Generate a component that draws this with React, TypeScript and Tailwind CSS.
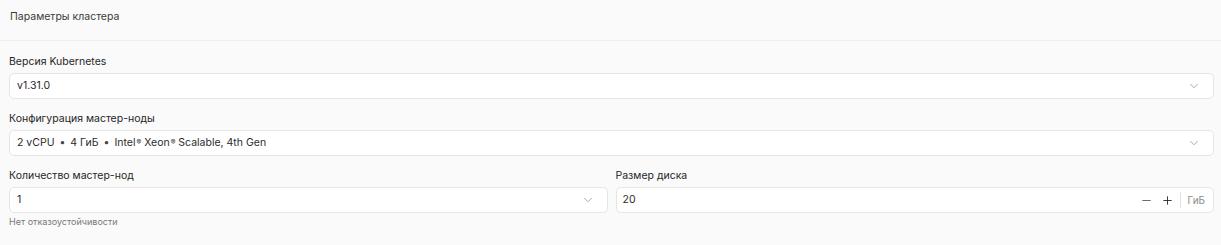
import { ChevronDown, Minus, Plus } from "lucide-react";

function Select({ value, className = "" }: { value: React.ReactNode; className?: string }) {
  return (
    <div
      className={`flex h-[26px] items-center justify-between rounded-[5px] border border-[#e6e6e6] bg-white pl-[7px] pr-[12px] text-[10.5px] text-[#2b2b2b] ${className}`}
    >
      <span className="truncate">{value}</span>
      <ChevronDown size={14} strokeWidth={1.25} className="shrink-0 text-[#8a8a8a]" />
    </div>
  );
}

function Label({ children }: { children: React.ReactNode }) {
  return <p className="mb-[4px] text-[10.5px] leading-[14px] text-[#262626]">{children}</p>;
}

const Dot = () => <span className="mx-[5px] text-[#444]">•</span>;
const Reg = () => <span className="relative top-[-1px] ml-px text-[7px]">®</span>;

export default function App() {
  return (
    <div className="min-h-[245px] w-full bg-[#fafafa] font-['Inter','Liberation_Sans',sans-serif]">
      <div className="h-[41px] border-b border-[#efefef] pl-[10px] pt-[10px]">
        <p className="text-[10.5px] leading-[14px] text-[#3a3a3a]">Параметры кластера</p>
      </div>

      <div className="flex flex-col gap-[13px] pl-[9px] pr-[7px] pt-[14px]">
        <div>
          <Label>Версия Kubernetes</Label>
          <Select value="v1.31.0" />
        </div>

        <div>
          <Label>Конфигурация мастер-ноды</Label>
          <Select
            value={
              <>
                2 vCPU
                <Dot />4 ГиБ
                <Dot />
                Intel<Reg /> Xeon<Reg /> Scalable, 4th Gen
              </>
            }
          />
        </div>

        <div className="grid grid-cols-2 gap-[8px]">
          <div>
            <Label>Количество мастер-нод</Label>
            <Select value="1" />
            <p className="mt-[3px] text-[9px] leading-[12px] text-[#777]">Нет отказоустойчивости</p>
          </div>
          <div>
            <Label>Размер диска</Label>
            <div className="flex h-[26px] items-center rounded-[5px] border border-[#e6e6e6] bg-white pl-[6px] pr-[8px] text-[10.5px] text-[#2b2b2b]">
              <span className="flex-1">20</span>
              <Minus size={13} strokeWidth={1.6} className="text-[#555]" />
              <Plus size={13} strokeWidth={1.6} className="ml-[8px] text-[#222]" />
              <span className="ml-[6px] h-[16px] w-px bg-[#e2e2e2]" />
              <span className="ml-[6px] text-[10px] text-[#8a8a8a]">ГиБ</span>
            </div>
          </div>
        </div>
      </div>
    </div>
  );
}
